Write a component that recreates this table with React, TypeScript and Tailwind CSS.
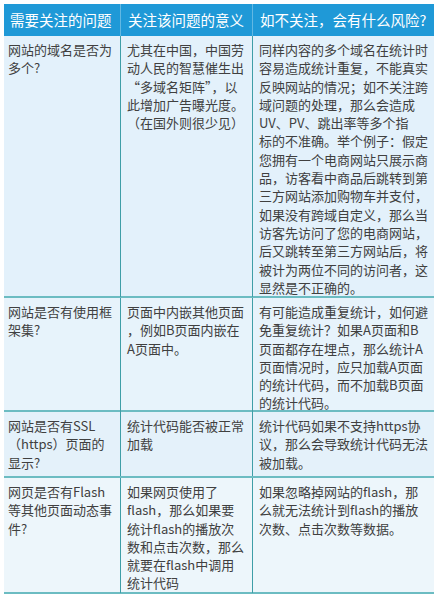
import React from 'react';

// 每个单元格按原图逐行拆分
const HEADERS = ['需要关注的问题', '关注该问题的意义', '如不关注，会有什么风险?'];

const ROWS: { h: string; bg: string; cells: string[][] }[] = [
  {
    h: 'h-[262px]',
    bg: 'bg-[#e3f1fb]',
    cells: [
      ['网站的域名是否为', '多个?'],
      ['尤其在中国，中国劳', '动人民的智慧催生出', '“多域名矩阵”，以', '此增加广告曝光度。', '（在国外则很少见）'],
      [
        '同样内容的多个域名在统计时',
        '容易造成统计重复，不能真实',
        '反映网站的情况；如不关注跨',
        '域问题的处理，那么会造成',
        'UV、PV、跳出率等多个指',
        '标的不准确。举个例子：假定',
        '您拥有一个电商网站只展示商',
        '品，访客看中商品后跳转到第',
        '三方网站添加购物车并支付，',
        '如果没有跨域自定义，那么当',
        '访客先访问了您的电商网站，',
        '后又跳转至第三方网站后，将',
        '被计为两位不同的访问者，这',
        '显然是不正确的。',
      ],
    ],
  },
  {
    h: 'h-[114px]',
    bg: 'bg-[#e7f3fb]',
    cells: [
      ['网站是否有使用框', '架集?'],
      ['页面中内嵌其他页面', '，例如B页面内嵌在', 'A页面中。'],
      [
        '有可能造成重复统计，如何避',
        '免重复统计？如果A页面和B',
        '页面都存在埋点，那么统计A',
        '页面情况时，应只加载A页面',
        '的统计代码，而不加载B页面',
        '的统计代码。',
      ],
    ],
  },
  {
    h: 'h-[66px]',
    bg: 'bg-[#e4f1fa]',
    cells: [
      ['网站是否有SSL', '（https）页面的', '显示?'],
      ['统计代码能否被正常', '加载'],
      ['统计代码如果不支持https协', '议，那么会导致统计代码无法', '被加载。'],
    ],
  },
  {
    h: 'h-[116px]',
    bg: 'bg-[#edf6fb]',
    cells: [
      ['网页是否有Flash', '等其他页面动态事', '件?'],
      ['如果网页使用了', 'flash，那么如果要', '统计flash的播放次', '数和点击次数，那么', '就要在flash中调用', '统计代码'],
      ['如果忽略掉网站的flash，那', '么就无法统计到flash的播放', '次数、点击次数等数据。'],
    ],
  },
];

function Cell({ lines, first }: { lines: string[]; first: boolean }) {
  return (
    <div className={`pt-[5px] ${first ? 'pl-[4px]' : 'border-l border-[#3f9ea7] pl-[6px]'}`}>
      {lines.map((l, i) => (
        <div key={i} className="whitespace-nowrap leading-[18.3px]">
          {l}
        </div>
      ))}
    </div>
  );
}

export default function App() {
  return (
    <div
      className="w-[438px] h-[600px] bg-white p-[4px]"
      style={{ fontFamily: '"Noto Sans CJK SC", "Noto Sans", sans-serif' }}
    >
      <div className="grid h-[32px] grid-cols-[116px_132px_182px] bg-[#1f99d7] text-[14.5px] text-white">
        {HEADERS.map((t, i) => (
          <div
            key={t}
            className={`flex items-center whitespace-nowrap ${i === 0 ? 'pl-[6px]' : 'border-l border-[#62b8e3] pl-[7px]'}`}
          >
            {t}
          </div>
        ))}
      </div>

      {ROWS.map((row, r) => (
        <div
          key={r}
          className={`grid grid-cols-[116px_132px_182px] border-b-2 border-[#6cbcc2] text-[13px] text-[#404040] ${row.h} ${row.bg}`}
        >
          {row.cells.map((c, i) => (
            <Cell key={i} lines={c} first={i === 0} />
          ))}
        </div>
      ))}
    </div>
  );
}
